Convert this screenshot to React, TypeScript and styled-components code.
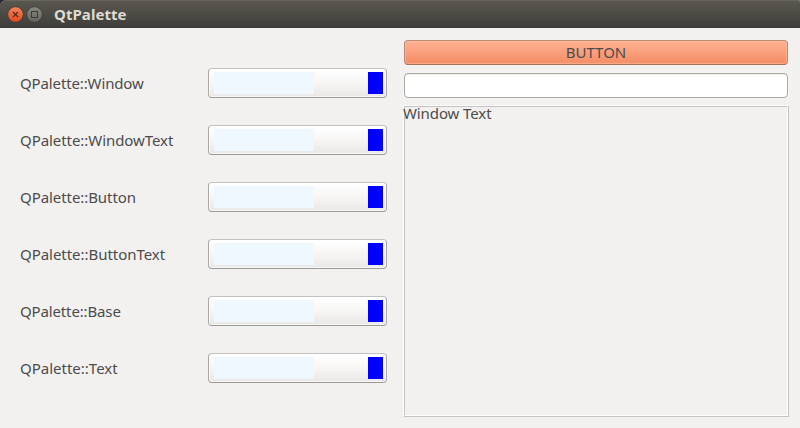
import React from "react";
import styled, { createGlobalStyle } from "styled-components";

const GlobalStyle = createGlobalStyle`
  * { box-sizing: border-box; }
  body {
    margin: 0;
    background: #f2f1f0;
    overflow: hidden;
    font-family: "Noto Sans", "Open Sans", sans-serif;
    font-size: 15px;
    color: #4c4c4c;
  }
`;

const Window = styled.main`
  width: 800px;
  height: 428px;
  display: flex;
  flex-direction: column;
  background: #f2f1f0;
`;

const Desktop = styled.div`
  height: 28px;
  background: linear-gradient(90deg, #2b2440 0 780px, #4f94d0 797px);
`;

const TitleBar = styled.header`
  height: 28px;
  padding-left: 7px;
  display: flex;
  align-items: center;
  background: linear-gradient(#5b5851, #3e3d39);
  border-radius: 6px 3px 0 0;
  box-shadow: inset 0 1px #69665f;
`;

const Controls = styled.svg`
  display: block;
  flex: none;
`;

const Title = styled.span`
  margin-left: 10px;
  line-height: 28px;
  font-size: 15px;
  font-weight: 700;
  color: #dfdbd2;
  white-space: nowrap;
`;

const Fit = styled.span<{ $spacing: number }>`
  letter-spacing: ${(p) => p.$spacing}px;
  white-space: nowrap;
`;

const Content = styled.div`
  flex: 1;
  display: grid;
  grid-template-columns: 367px 386px;
  column-gap: 16px;
  padding: 12px 0 0 20px;
`;

const Settings = styled.div`
  display: flex;
  flex-direction: column;
  padding-top: 28px;
  gap: 27px;
`;

const Row = styled.div`
  height: 30px;
  display: grid;
  grid-template-columns: 188px 179px;
  line-height: 31px;
`;

const ColorButton = styled.button`
  height: 30px;
  padding: 3px 3px 4px 5px;
  display: flex;
  justify-content: space-between;
  border: 1px solid;
  border-color: #c4c2bf #aaa8a5 #9c9a97 #aaa8a5;
  border-radius: 4px;
  background: linear-gradient(#ffffff, #f8f7f6 45%, #e9e8e6);
  box-shadow: inset 0 0 0 1px rgba(255, 255, 255, 0.65);
`;

const Swatch = styled.span<{ $width: number; $color: string }>`
  width: ${(p) => p.$width}px;
  height: 22px;
  background: ${(p) => p.$color};
`;

const Preview = styled.div`
  display: flex;
  flex-direction: column;
`;

const PreviewButton = styled.button`
  width: 384px;
  height: 25px;
  margin-left: 1px;
  padding: 0;
  border: 1px solid;
  border-color: #bb8b78 #b98a77 #a97158;
  border-radius: 4px;
  background: linear-gradient(#ffb294, #fba582 35%, #f4916a 85%, #f7936c);
  box-shadow: inset 0 0 0 1px rgba(255, 190, 160, 0.5), 0 1px #f7f6f5;
  font: inherit;
  line-height: 23px;
  color: #4c4c4c;
`;

const PreviewInput = styled.input`
  width: 384px;
  height: 25px;
  margin: 8px 0 0 1px;
  padding: 0 4px;
  border: 1px solid #aaa9a3;
  border-radius: 4px;
  background: #fff;
  box-shadow: inset 0 1px #eeeeec, 0 0 0 1px #f5f4f3;
`;

const Frame = styled.section`
  width: 386px;
  height: 312px;
  margin-top: 7px;
  border: 1px solid;
  border-color: #fff #c5c4c3 #c5c4c3 #fff;
`;

const FrameInner = styled.div`
  height: 100%;
  border: 1px solid;
  border-color: #c5c4c3 #fff #fff #c5c4c3;
  line-height: 16px;
`;

const FrameText = styled.div`
  margin: -2px 0 0 -2px;
`;

const rows = [
  { label: "QPalette::Window", spacing: -0.13 },
  { label: "QPalette::WindowText", spacing: -0.06 },
  { label: "QPalette::Button", spacing: -0.07 },
  { label: "QPalette::ButtonText", spacing: -0.04 },
  { label: "QPalette::Base", spacing: -0.14 },
  { label: "QPalette::Text", spacing: 0 },
];

function WindowControls() {
  return (
    <Controls width="37" height="28" viewBox="0 0 37 28">
      <defs>
        <linearGradient id="close" x1="0" y1="0" x2="0" y2="1">
          <stop offset="0" stopColor="#f58462" />
          <stop offset="1" stopColor="#e2491b" />
        </linearGradient>
        <linearGradient id="maximize" x1="0" y1="0" x2="0" y2="1">
          <stop offset="0" stopColor="#8b8982" />
          <stop offset="1" stopColor="#65635d" />
        </linearGradient>
      </defs>
      <circle cx="8.5" cy="14.5" r="7.8" fill="url(#close)" stroke="#3b3630" strokeWidth="0.8" />
      <path d="M6 12l5 5M11 12l-5 5" stroke="#50301f" strokeWidth="1.3" />
      <circle cx="27.5" cy="14.5" r="7.8" fill="url(#maximize)" stroke="#3b3a36" strokeWidth="0.8" />
      <rect x="24.5" y="11.5" width="6" height="6" fill="none" stroke="#3c3b37" />
    </Controls>
  );
}

export default function App() {
  return (
    <>
      <GlobalStyle />
      <Window>
        <Desktop>
          <TitleBar>
            <WindowControls />
            <Title><Fit $spacing={0.05}>QtPalette</Fit></Title>
          </TitleBar>
        </Desktop>
        <Content>
          <Settings>
            {rows.map(({ label, spacing }) => (
              <Row key={label}>
                <Fit $spacing={spacing}>{label}</Fit>
                <ColorButton aria-label={label}>
                  <Swatch $width={100} $color="#eff7ff" />
                  <Swatch $width={15} $color="#0000ff" />
                </ColorButton>
              </Row>
            ))}
          </Settings>
          <Preview>
            <PreviewButton><Fit $spacing={0}>BUTTON</Fit></PreviewButton>
            <PreviewInput aria-label="Text" />
            <Frame>
              <FrameInner>
                <FrameText><Fit $spacing={-0.1}>Window Text</Fit></FrameText>
              </FrameInner>
            </Frame>
          </Preview>
        </Content>
      </Window>
    </>
  );
}
